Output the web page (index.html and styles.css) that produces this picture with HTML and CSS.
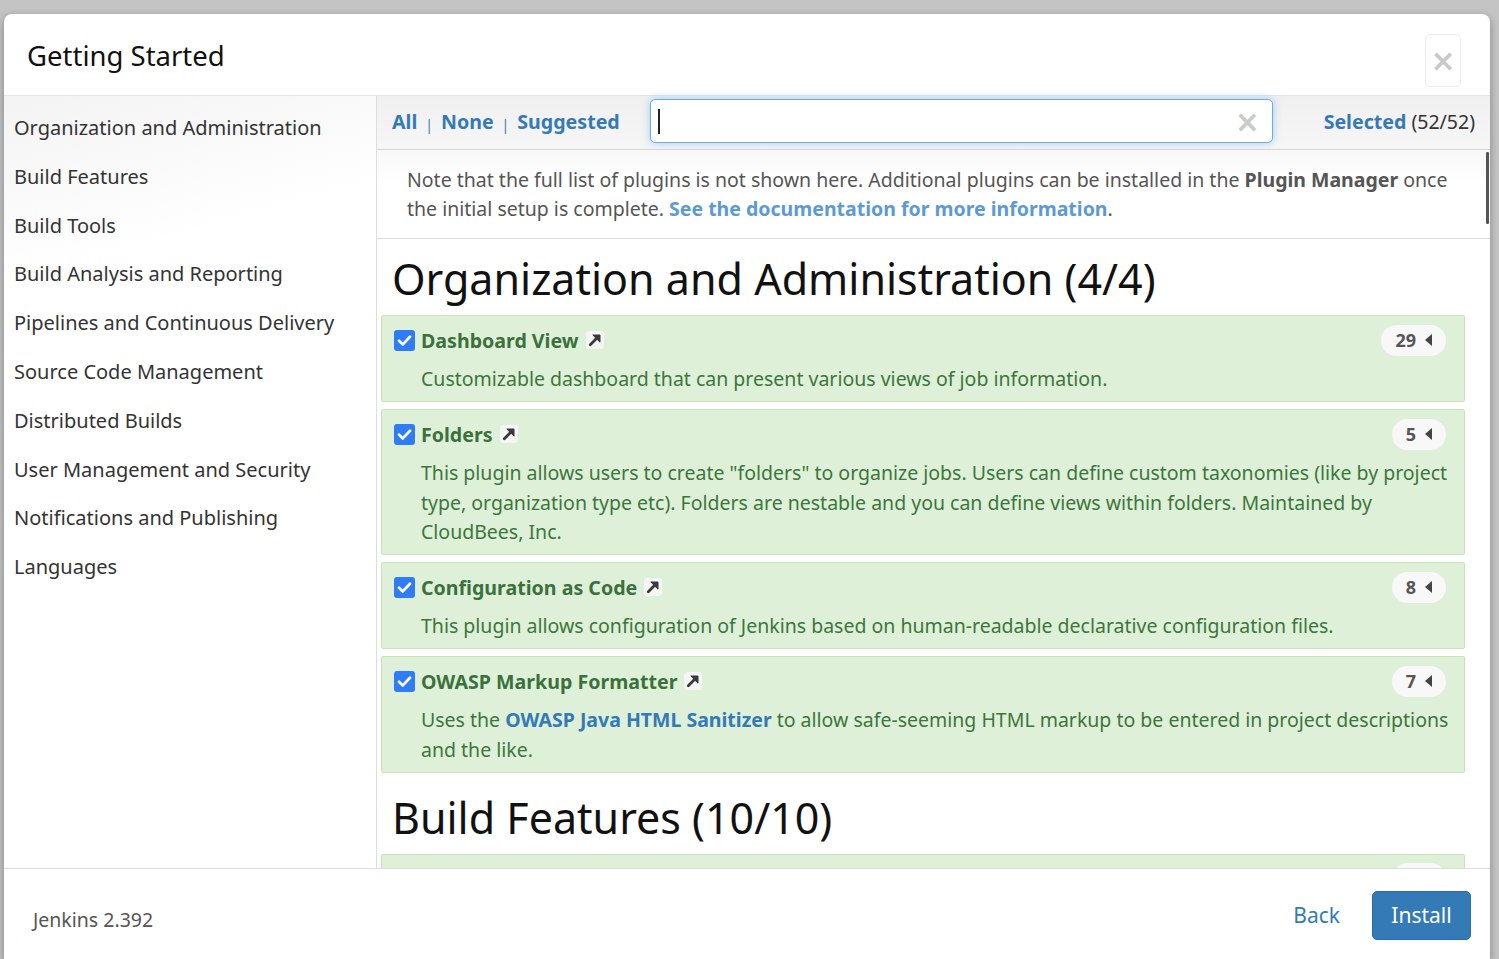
FILE: index.html
```html
<!DOCTYPE html>
<html>
<head>
<meta charset="utf-8">
<title>Getting Started</title>
<link rel="stylesheet" href="styles.css">
</head>
<body>
<div class="modal">
  <div class="modal-header">
    <h1 class="modal-title">Getting Started</h1>
    <button class="close-btn">&times;</button>
  </div>
  <div class="modal-body">
    <ul class="categories">
      <li>Organization and Administration</li>
      <li>Build Features</li>
      <li>Build Tools</li>
      <li>Build Analysis and Reporting</li>
      <li>Pipelines and Continuous Delivery</li>
      <li>Source Code Management</li>
      <li>Distributed Builds</li>
      <li>User Management and Security</li>
      <li>Notifications and Publishing</li>
      <li>Languages</li>
    </ul>
    <div class="main">
      <div class="toolbar">
        <div class="select-links">
          <a class="tlink">All</a><span class="sep">|</span><a class="tlink">None</a><span class="sep">|</span><a class="tlink">Suggested</a>
        </div>
        <div class="search">
          <span class="caret"></span>
          <span class="clear">&times;</span>
        </div>
        <div class="selected"><a class="tlink">Selected</a> (52/52)</div>
      </div>
      <div class="scroll">
        <div class="scrollbar"></div>
        <p class="note">Note that the full list of plugins is not shown here. Additional plugins can be installed in the <b>Plugin Manager</b> once the initial setup is complete. <a class="doc-link">See the documentation for more information</a>.</p>
        <div class="plugins">
          <h2 class="cat-title">Organization and Administration (4/4)</h2>

          <div class="plugin">
            <div class="plugin-head">
              <span class="check"><svg viewBox="0 0 21 21" width="21" height="21"><path d="M5 10.8 L8.8 14.4 L16 6.8" fill="none" stroke="#fff" stroke-width="2.8" stroke-linecap="round" stroke-linejoin="round"/></svg></span>
              <span class="plugin-name">Dashboard View</span>
              <span class="ext"><svg viewBox="0 0 18 18" width="18" height="18"><path d="M4.3 13.7 L12.2 5.8" stroke="#3a3a3a" stroke-width="2.8" stroke-linecap="round"/><path d="M6.8 4 H14 V11.2 Z" fill="#3a3a3a" stroke="#3a3a3a" stroke-width="1" stroke-linejoin="round"/></svg></span>
              <span class="badge">29 <i class="tri"></i></span>
            </div>
            <div class="plugin-desc">Customizable dashboard that can present various views of job information.</div>
          </div>

          <div class="plugin">
            <div class="plugin-head">
              <span class="check"><svg viewBox="0 0 21 21" width="21" height="21"><path d="M5 10.8 L8.8 14.4 L16 6.8" fill="none" stroke="#fff" stroke-width="2.8" stroke-linecap="round" stroke-linejoin="round"/></svg></span>
              <span class="plugin-name">Folders</span>
              <span class="ext"><svg viewBox="0 0 18 18" width="18" height="18"><path d="M4.3 13.7 L12.2 5.8" stroke="#3a3a3a" stroke-width="2.8" stroke-linecap="round"/><path d="M6.8 4 H14 V11.2 Z" fill="#3a3a3a" stroke="#3a3a3a" stroke-width="1" stroke-linejoin="round"/></svg></span>
              <span class="badge">5 <i class="tri"></i></span>
            </div>
            <div class="plugin-desc">This plugin allows users to create "folders" to organize jobs. Users can define custom taxonomies (like by project type, organization type etc). Folders are nestable and you can define views within folders. Maintained by CloudBees, Inc.</div>
          </div>

          <div class="plugin">
            <div class="plugin-head">
              <span class="check"><svg viewBox="0 0 21 21" width="21" height="21"><path d="M5 10.8 L8.8 14.4 L16 6.8" fill="none" stroke="#fff" stroke-width="2.8" stroke-linecap="round" stroke-linejoin="round"/></svg></span>
              <span class="plugin-name">Configuration as Code</span>
              <span class="ext"><svg viewBox="0 0 18 18" width="18" height="18"><path d="M4.3 13.7 L12.2 5.8" stroke="#3a3a3a" stroke-width="2.8" stroke-linecap="round"/><path d="M6.8 4 H14 V11.2 Z" fill="#3a3a3a" stroke="#3a3a3a" stroke-width="1" stroke-linejoin="round"/></svg></span>
              <span class="badge">8 <i class="tri"></i></span>
            </div>
            <div class="plugin-desc">This plugin allows configuration of Jenkins based on human-readable declarative configuration files.</div>
          </div>

          <div class="plugin">
            <div class="plugin-head">
              <span class="check"><svg viewBox="0 0 21 21" width="21" height="21"><path d="M5 10.8 L8.8 14.4 L16 6.8" fill="none" stroke="#fff" stroke-width="2.8" stroke-linecap="round" stroke-linejoin="round"/></svg></span>
              <span class="plugin-name">OWASP Markup Formatter</span>
              <span class="ext"><svg viewBox="0 0 18 18" width="18" height="18"><path d="M4.3 13.7 L12.2 5.8" stroke="#3a3a3a" stroke-width="2.8" stroke-linecap="round"/><path d="M6.8 4 H14 V11.2 Z" fill="#3a3a3a" stroke="#3a3a3a" stroke-width="1" stroke-linejoin="round"/></svg></span>
              <span class="badge">7 <i class="tri"></i></span>
            </div>
            <div class="plugin-desc">Uses the <a class="desc-link">OWASP Java HTML Sanitizer</a> to allow safe-seeming HTML markup to be entered in project descriptions and the like.</div>
          </div>

          <h2 class="cat-title next">Build Features (10/10)</h2>

          <div class="plugin">
            <div class="plugin-head">
              <span class="badge empty"></span>
            </div>
          </div>
        </div>
      </div>
    </div>
  </div>
  <div class="modal-footer">
    <span class="version">Jenkins 2.392</span>
    <div class="actions">
      <a class="back">Back</a>
      <button class="install">Install</button>
    </div>
  </div>
</div>
</body>
</html>
```

FILE: styles.css
```css
* { box-sizing: border-box; }
html, body {
  margin: 0;
  height: 959px;
  overflow: hidden;
}
body {
  background: #c4c4c4;
  font-family: "Noto Sans", "Open Sans", sans-serif;
  padding: 14px 9px 0 4px;
}
.modal {
  background: #fff;
  border-radius: 8px 8px 0 0;
  height: 945px;
  display: flex;
  flex-direction: column;
  box-shadow: 0 3px 9px rgba(0,0,0,.35);
  overflow: hidden;
}
.modal-header {
  height: 82px;
  flex: none;
  border-bottom: 1px solid #e5e5e5;
  display: flex;
  align-items: center;
  justify-content: space-between;
  padding: 0 29px 0 23px;
}
.modal-title {
  margin: 2px 0 0;
  font-size: 27.5px;
  font-weight: 400;
  color: #111;
}
.close-btn {
  width: 36px;
  height: 53px;
  margin-top: 12px;
  border: 1px solid #ececec;
  border-radius: 5px;
  background: #fff;
  color: #c8c8c8;
  font-size: 30px;
  font-weight: 700;
  font-family: "DejaVu Sans", sans-serif;
  line-height: 1;
  padding: 0;
}
.modal-body {
  flex: 1;
  min-height: 0;
  display: flex;
}
.categories {
  list-style: none;
  margin: 0;
  padding: 8px 0 0 10px;
  width: 373px;
  flex: none;
  border-right: 1px solid #ddd;
  background: linear-gradient(165deg, #f3f3f3 0%, #fff 22%, #fff 100%);
}
.categories li {
  font-size: 20px;
  line-height: 28.8px;
  padding: 10px 0;
  color: #333;
}
.main {
  flex: 1;
  min-width: 0;
  display: flex;
  flex-direction: column;
}
.toolbar {
  height: 54px;
  flex: none;
  background: linear-gradient(#f0f0f0, #f6f6f6);
  border-bottom: 1px solid #d6d6d6;
  display: flex;
  align-items: center;
  padding: 0 15px 0 15px;
}
.select-links {
  display: flex;
  align-items: center;
  width: 258px;
  padding-bottom: 2px;
}
.tlink {
  color: #337ab7;
  font-weight: 700;
  font-size: 19.6px;
}
.sep {
  color: #337ab7;
  font-size: 14px;
  margin: 5px 8px 0;
}
.search {
  width: 623px;
  height: 44px;
  margin-top: -3px;
  border: 1px solid #66afe9;
  border-radius: 5px;
  background: #fff;
  box-shadow: 0 0 8px rgba(102,175,233,.55);
  display: flex;
  align-items: center;
  justify-content: space-between;
  padding: 0 12px 0 7px;
}
.caret {
  width: 2px;
  height: 25px;
  background: #222;
}
.clear {
  color: #cacaca;
  font-size: 30px;
  font-weight: 700;
  font-family: "DejaVu Sans", sans-serif;
  line-height: 1;
  margin-top: 2px;
}
.selected {
  margin-left: auto;
  font-size: 19.5px;
  color: #333;
  padding-bottom: 2px;
}
.scroll {
  flex: 1;
  min-height: 0;
  overflow: hidden;
  position: relative;
}
.scrollbar {
  position: absolute;
  right: 1px;
  top: 2px;
  width: 3px;
  height: 72px;
  background: #555;
  border-radius: 1px;
}
.note {
  margin: 0;
  padding: 15px 30px 15px 30px;
  font-size: 19.5px;
  line-height: 29px;
  color: #555;
  border-bottom: 1px solid #ddd;
  background: linear-gradient(#f8f8f8, #fff 40%);
}
.note b { color: #555; }
.doc-link {
  color: #5b9bd5;
  font-weight: 700;
}
.plugins {
  padding: 0 25px 0 4px;
}
.cat-title {
  margin: 16px 0 12px 11px;
  font-size: 43px;
  font-weight: 400;
  line-height: 48px;
  color: #111;
}
.cat-title.next {
  margin-top: 21px;
}
.plugin {
  background: #dff0d8;
  border: 1px solid #c6e4b6;
  border-radius: 2px;
  padding: 9px 8px 7.5px 12px;
  margin-bottom: 7px;
}
.plugin-head {
  display: flex;
  align-items: center;
  height: 30px;
}
.check {
  width: 21px;
  height: 21px;
  border-radius: 3px;
  background: #2f7cf6;
  display: flex;
  flex: none;
  margin-right: 6px;
}
.plugin-name {
  font-size: 19.6px;
  font-weight: 700;
  color: #3b713c;
}
.ext {
  width: 18px;
  height: 18px;
  margin-left: 7px;
  background: #f5f5f5;
  border-radius: 3px;
  display: flex;
}
.badge {
  margin-left: auto;
  margin-right: 10px;
  height: 31px;
  border-radius: 16px;
  background: #f8f8f8;
  color: #555;
  font-size: 18px;
  font-weight: 700;
  display: flex;
  align-items: center;
  padding: 0 14px;
}
.badge.empty {
  width: 54px;
}
.tri {
  display: inline-block;
  width: 0;
  height: 0;
  border-top: 6px solid transparent;
  border-bottom: 6px solid transparent;
  border-right: 7px solid #444;
  margin-left: 9px;
}
.plugin-desc {
  margin-top: 9px;
  padding-left: 27px;
  font-size: 19.5px;
  line-height: 29.5px;
  color: #3c763d;
}
.desc-link {
  color: #337ab7;
  font-weight: 700;
}
.modal-footer {
  height: 91px;
  flex: none;
  border-top: 1px solid #ddd;
  display: flex;
  align-items: center;
  justify-content: space-between;
  padding: 0 19px 0 29px;
}
.version {
  font-size: 19.5px;
  color: #555;
  margin-top: 11px;
}
.actions {
  display: flex;
  align-items: center;
  gap: 32px;
  margin-top: 2px;
}
.back {
  color: #337ab7;
  font-size: 21px;
}
.install {
  width: 99px;
  height: 49px;
  background: #337ab7;
  border: 1px solid #2e6da4;
  border-radius: 5px;
  color: #fff;
  font-family: "Noto Sans", "Open Sans", sans-serif;
  font-size: 21px;
  padding: 0;
}
```
